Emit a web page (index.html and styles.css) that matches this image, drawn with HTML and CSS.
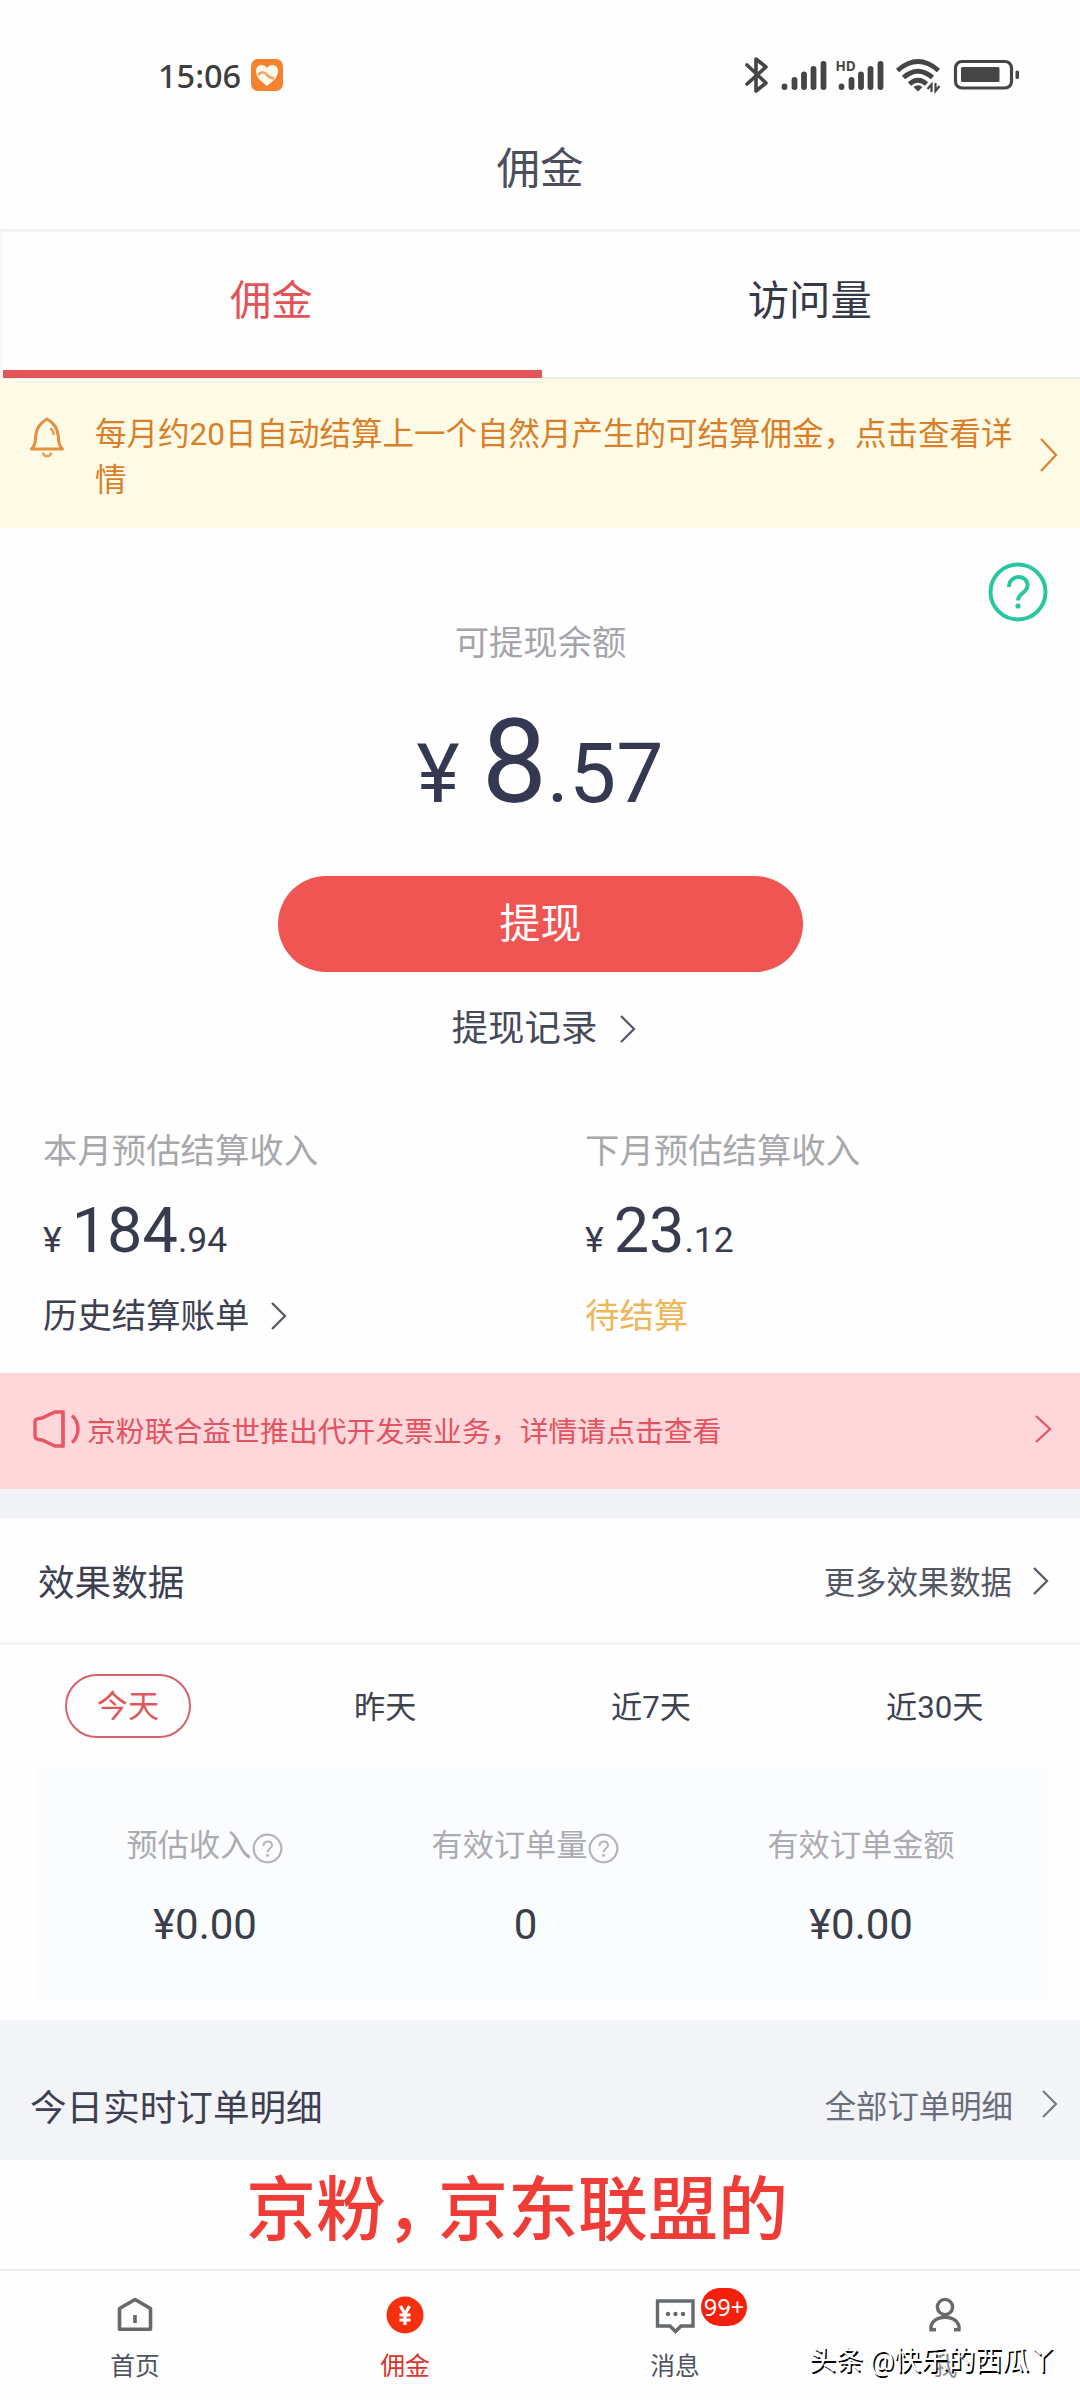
FILE: index.html
```html
<!DOCTYPE html>
<html lang="zh-CN">
<head>
<meta charset="utf-8">
<title>佣金</title>
<link rel="stylesheet" href="styles.css">
</head>
<body>
<div class="screen">
  <header class="status">
    <div class="status-left">
      <span class="time">15:06</span>
      <svg class="app-badge" width="32" height="32" viewBox="0 0 32 32"><rect width="32" height="32" rx="7" fill="#f4822f"/><path d="M16 27C8 21 5 17 5 12c0-7 8-8 11-3 3-5 11-4 11 3 0 5-3 9-11 15z" fill="#fff8ec"/><path d="M7 16c4-4 7-3 9 0 2 2 4 4 7 3" fill="none" stroke="#f4a25f" stroke-width="2.5"/></svg>
    </div>
    <svg class="status-icons" width="280" height="40" viewBox="740 54 280 40">
      <path d="M747 65l19 18-10 8V59l10 8-19 17" fill="none" stroke="#454545" stroke-width="3.6" stroke-linejoin="round" stroke-linecap="round"/>
      <g stroke="#454545" stroke-width="5.8" stroke-linecap="round">
        <path d="M784.500 86.500v.5M794.500 80v7M804 74.500V87M813.500 69v18M823.500 64v23"/>
        <path d="M841.500 86.500v.5M851.500 80v7M861 74.500V87M870.500 69v18M880.500 64v23"/>
      </g>
      <text x="835.500" y="70.500" class="hd">HD</text>
      <g fill="none" stroke="#454545" stroke-width="4.800">
        <path d="M897.500 70.500q20.500-18 41 0"/><path d="M903.500 77.500q14.500-12.500 29 0"/><path d="M909.500 84q8.500-7.500 17 0"/>
      </g>
      <path d="M913.500 87q4.500-3.600 9 0L918 91.500z" fill="#454545"/>
      <path d="M931.500 92V84.500l-4 4.500M935.500 83V91l4-5" fill="none" stroke="#454545" stroke-width="2.200"/>
      <rect x="955.500" y="61.500" width="56" height="26.500" rx="6.500" fill="none" stroke="#454545" stroke-width="3.200"/>
      <rect x="961" y="67" width="38.500" height="15" rx="1.500" fill="#454545"/>
      <rect x="1015.500" y="70.500" width="3.500" height="8.500" rx="1.500" fill="#454545"/>
    </svg>
  </header>
  <h1 class="title">佣金</h1>

  <nav class="tabs">
    <a class="tab active">佣金</a>
    <a class="tab">访问量</a>
  </nav>

  <section class="notice">
    <svg class="bell" width="36" height="44" viewBox="0 0 36 44"><path d="M2.500 34c3-3 4-6 4-10C7 13 11 8 18 4c7 4 11 9 11.500 20 0 4 1 7 4 10z" fill="none" stroke="#e59040" stroke-width="3.100" stroke-linejoin="round"/><path d="M22 14c2 1.500 2.500 3 2.500 5M14 38.500c1.500 3.500 6.500 3.500 8 0" fill="none" stroke="#e5a05c" stroke-width="2.600" stroke-linecap="round"/></svg>
    <p class="notice-text">每月约20日自动结算上一个自然月产生的可结算佣金，点击查看详情</p>
    <svg class="notice-arrow" width="19" height="36" viewBox="0 0 19 36"><path d="M2 2l15 16L2 34" fill="none" stroke="#d98636" stroke-width="2.400"/></svg>
  </section>

  <section class="balance">
    <svg class="help" width="60" height="60" viewBox="0 0 60 60"><circle cx="30" cy="30" r="27.500" fill="none" stroke="#2ac6a0" stroke-width="4"/><path d="M21 25c0-13 18.500-13 18.500-1.500 0 7.500-9.500 7.500-9.500 15" fill="none" stroke="#2ac6a0" stroke-width="4"/><circle cx="30" cy="44" r="2.600" fill="#2ac6a0"/></svg>
    <p class="balance-label">可提现余额</p>
    <p class="balance-sum"><span class="yen">¥</span><span class="whole">8</span><span>.57</span></p>
    <button class="withdraw">提现</button>
    <a class="record">提现记录<svg width="17" height="30" viewBox="0 0 17 30"><path d="M2 2l13 13L2 28" fill="none" stroke="#555a66" stroke-width="2.300"/></svg></a>
  </section>

  <section class="income">
    <div class="income-col">
      <p class="income-label">本月预估结算收入</p>
      <p class="income-sum"><span class="yen">¥</span><span class="whole">184</span><span>.94</span></p>
      <a class="income-link">历史结算账单<svg width="17" height="30" viewBox="0 0 17 30"><path d="M2 2l13 13L2 28" fill="none" stroke="#555a66" stroke-width="2.300"/></svg></a>
    </div>
    <div class="income-col">
      <p class="income-label">下月预估结算收入</p>
      <p class="income-sum"><span class="yen">¥</span><span class="whole">23</span><span>.12</span></p>
      <span class="income-link pending">待结算</span>
    </div>
  </section>

  <section class="promo">
    <svg width="48" height="40" viewBox="0 0 48 40"><path d="M2 12.500C2 10 4 9.500 9 9l13-6h8v34h-8L9 31c-5-.5-7-1-7-3.500zM39 6.500c8 7 8 20 0 27" fill="none" stroke="#ea5563" stroke-width="3.400"/><path d="M30 3v34" stroke="#ea5563" stroke-width="3"/></svg>
    <p class="promo-text">京粉联合益世推出代开发票业务，详情请点击查看</p>
    <svg width="18" height="30" viewBox="0 0 18 30"><path d="M2 2l14 13L2 28" fill="none" stroke="#e2566a" stroke-width="2.300"/></svg>
  </section>

  <section class="effect">
    <div class="effect-head">
      <h2 class="heading">效果数据</h2>
      <a class="more">更多效果数据<svg width="17" height="30" viewBox="0 0 17 30"><path d="M2 2l13 13L2 28" fill="none" stroke="#555a66" stroke-width="2.300"/></svg></a>
    </div>
    <div class="ranges">
      <a class="range selected">今天</a>
      <a class="range">昨天</a>
      <a class="range">近7天</a>
      <a class="range">近30天</a>
    </div>
    <div class="metrics">
      <div class="metric">
        <p class="metric-label">预估收入<svg width="31" height="31" viewBox="0 0 31 31"><circle cx="15.500" cy="15.500" r="13.800" fill="none" stroke="#b4b4b9" stroke-width="2.200"/><path d="M11.500 13c0-6 8.500-6 8.500-.8 0 3.500-4.500 3.500-4.500 7" fill="none" stroke="#b4b4b9" stroke-width="2"/><circle cx="15.500" cy="22.500" r="1.400" fill="#b4b4b9"/></svg></p>
        <p class="metric-value">¥0.00</p>
      </div>
      <div class="metric">
        <p class="metric-label">有效订单量<svg width="31" height="31" viewBox="0 0 31 31"><circle cx="15.500" cy="15.500" r="13.800" fill="none" stroke="#b4b4b9" stroke-width="2.200"/><path d="M11.500 13c0-6 8.500-6 8.500-.8 0 3.500-4.500 3.500-4.500 7" fill="none" stroke="#b4b4b9" stroke-width="2"/><circle cx="15.500" cy="22.500" r="1.400" fill="#b4b4b9"/></svg></p>
        <p class="metric-value">0</p>
      </div>
      <div class="metric">
        <p class="metric-label">有效订单金额</p>
        <p class="metric-value">¥0.00</p>
      </div>
    </div>
  </section>

  <section class="orders">
    <h2 class="heading">今日实时订单明细</h2>
    <a class="more">全部订单明细<svg width="17" height="30" viewBox="0 0 17 30"><path d="M2 2l13 13L2 28" fill="none" stroke="#7b7e88" stroke-width="2.300"/></svg></a>
  </section>

  <p class="caption">京粉<span class="comma">，</span>京东联盟的</p>

  <nav class="bottom">
    <a class="item">
      <svg width="40" height="40" viewBox="0 0 40 40"><path d="M4.500 13.500L20 4.500l15.500 9v20.800h-31z" fill="none" stroke="#666a6c" stroke-width="3.600" stroke-linejoin="round"/><path d="M20 20v8" stroke="#666a6c" stroke-width="3.600"/></svg>
      <span>首页</span>
    </a>
    <a class="item current">
      <svg width="40" height="40" viewBox="0 0 40 40"><circle cx="20" cy="20" r="18.500" fill="#f5300f"/><path d="M15.500 11l4.500 8 4.500-8M20 19v11M14.500 20h11M14.500 25h11" fill="none" stroke="#fff" stroke-width="3.200"/></svg>
      <span>佣金</span>
    </a>
    <a class="item">
      <svg width="40" height="40" viewBox="0 0 40 40"><path d="M2.500 6h35.500v25H26l-5.500 5.500L15 31H2.500z" fill="none" stroke="#666a6c" stroke-width="3.400"/><g fill="#666a6c"><circle cx="13" cy="19" r="2.200"/><circle cx="20.500" cy="19" r="2.200"/><circle cx="28" cy="19" r="2.200"/></g></svg>
      <span>消息</span>
      <b class="count">99+</b>
    </a>
    <a class="item">
      <svg width="40" height="40" viewBox="0 0 40 40"><circle cx="20" cy="12" r="7.600" fill="none" stroke="#666a6c" stroke-width="3.400"/><path d="M11 34.800H6C4 18 36 18 34 34.800h-5" fill="none" stroke="#666a6c" stroke-width="3.400"/></svg>
      <span class="faint">我</span>
    </a>
  </nav>
  <p class="watermark">头条 @快乐的西瓜丫</p>
</div>
</body>
</html>
```

FILE: styles.css
```css
* { box-sizing: border-box; margin: 0; padding: 0; }

body {
  width: 1080px;
  background: #fefefe;
  color: #3d4150;
  font-family: Roboto, "Noto Sans CJK SC", sans-serif;
}

h1, h2 { font-weight: 400; }
p, h1, h2, a, span { white-space: nowrap; }
svg { flex: none; display: block; }

.screen { position: relative; height: 2400px; overflow: hidden; display: flex; flex-direction: column; }
.screen > * { flex: none; }

.status { height: 110px; padding: 54px 60px 0 158px; display: flex; justify-content: space-between; }
.status-left { display: flex; align-items: center; gap: 10px; height: 42px; }
.time { font-family: "Noto Sans", sans-serif; font-size: 32.500px; font-weight: 500; color: #3e3e3e; }
.hd { font: 700 13.500px "Open Sans", sans-serif; fill: #454545; }

.title { height: 119px; line-height: 119px; text-align: center; font-size: 43.500px; color: #4b4e5b; }

.tabs { height: 150px; display: flex; border-top: 3px solid #f0f1f1; border-left: 3px solid #f6f6f7; border-bottom: 2px solid #eeefea; }
.tab { flex: 1; height: 146px; padding-right: 2px; line-height: 138px; text-align: center; font-size: 41.300px; color: #343847; }
.tab.active { color: #e25358; border-bottom: 8px solid #e45558; }

.notice { height: 149px; background: #fdfbe6; display: flex; padding: 33px 22px 0 29px; }
.bell { margin-top: 3px; }
.notice-text { width: 920px; margin-left: 30px; font-size: 31.500px; line-height: 46px; white-space: normal; color: #da7e28; }
.notice-arrow { margin: 25px 0 0 auto; }

.balance { position: relative; height: 552px; display: flex; flex-direction: column; align-items: center; }
.help { position: absolute; right: 32px; top: 34px; }
.balance-label { margin-top: 90px; padding-left: 1px; font-size: 34.300px; line-height: 50px; color: #a4a4aa; }
.balance-sum { margin-top: 34px; height: 122px; line-height: 120px; font-size: 84px; color: #343850; }
.balance-sum .yen { margin-right: 22px; font-size: 82px; }
.balance-sum .whole { font-size: 116px; }
.withdraw { margin: 52px 0 0 1px; width: 525px; height: 96px; padding-bottom: 8px; border: 0; border-radius: 48px; background: #f05453; color: #fff; font: 400 41px Roboto, "Noto Sans CJK SC", sans-serif; }
.record { margin: 31px 0 0 8px; display: flex; align-items: center; gap: 22px; font-size: 36.400px; line-height: 52px; color: #454959; }

.income { height: 293px; display: flex; padding: 46px 0 0 43px; }
.income-col { flex: none; width: 542px; }
.income-label { font-size: 34.400px; line-height: 50px; color: #a8a8ac; }
.income-sum { height: 79px; margin-top: 15px; line-height: 80px; font-size: 35.500px; color: #383b4d; }
.income-sum .yen { margin-right: 10px; }
.income-sum .whole { font-size: 63px; }
.income-link { margin-top: 21px; display: flex; align-items: center; gap: 21px; font-size: 34.400px; line-height: 50px; }
.income-link.pending { color: #eeb65a; }

.promo { height: 116px; background: #fed7db; display: flex; align-items: center; padding: 0 28px 4px 33px; color: #e3525f; }
.promo-text { margin: 0 auto 0 6px; font-size: 28.850px; }

.effect { height: 531px; border-top: 29px solid #f2f3f6; }
.effect-head { height: 127px; padding: 1px 31px 0 38px; border-bottom: 3px solid #f3f5f5; display: flex; justify-content: space-between; align-items: center; }
.heading { font-size: 36.600px; color: #3c4050; }
.more { display: flex; align-items: center; gap: 20px; font-size: 31.400px; color: #545865; }

.ranges { height: 122px; padding-left: 65px; display: grid; grid-template-columns: 289px 257px 275px auto; align-items: center; font-size: 31.200px; line-height: 46px; color: #3e4350; }
.range { padding-top: 3px; }
.range.selected { width: 126px; height: 64px; padding: 0; line-height: 62px; text-align: center; border: 2px solid #d5626d; border-radius: 32px; color: #e0575a; }

.metrics { width: 1015px; height: 233px; margin-left: 35px; background: #fbfcfe; display: grid; grid-template-columns: 340px 301px 370px; padding: 56px 0 0; }
.metric { display: flex; flex-direction: column; align-items: center; }
.metric-label { display: flex; align-items: center; gap: 1px; font-size: 31.200px; line-height: 46px; color: #ababb0; }
.metric-label svg { margin-top: 4px; }
.metric-value { margin-top: 31px; font-size: 42px; line-height: 50px; color: #3b3f4b; }

.orders { height: 140px; padding: 31px 22px 0 30px; background: #f3f4f8; display: flex; justify-content: space-between; align-items: center; }
.orders .more { gap: 28px; padding-bottom: 3px; color: #6a6e7a; }

.caption { height: 109px; line-height: 102px; padding-left: 246px; font-size: 70px; font-weight: 500; color: #ef3c36; }
.comma { display: inline-block; width: 52px; font-feature-settings: "halt"; }

.bottom { height: 131px; border-top: 2px solid #e9eaeb; display: grid; grid-template-columns: repeat(4, 270px); }
.item { position: relative; display: flex; flex-direction: column; align-items: center; padding-top: 24px; font-size: 24.800px; line-height: 36px; color: #50535f; }
.item span { margin-top: 14px; }
.item .faint { color: #8a8c92; }
.item.current { color: #d9362b; }
.count { position: absolute; left: 161px; top: 17px; width: 46px; height: 38px; border-radius: 19px; background: #f5200c; color: #fff; font: 400 23.500px/38px "Noto Sans", sans-serif; text-align: center; }

.watermark { position: absolute; left: 809px; top: 2341px; font-size: 27px; line-height: 40px; color: #fff; text-shadow: 1.500px 1.500px 0 #000; }
```
